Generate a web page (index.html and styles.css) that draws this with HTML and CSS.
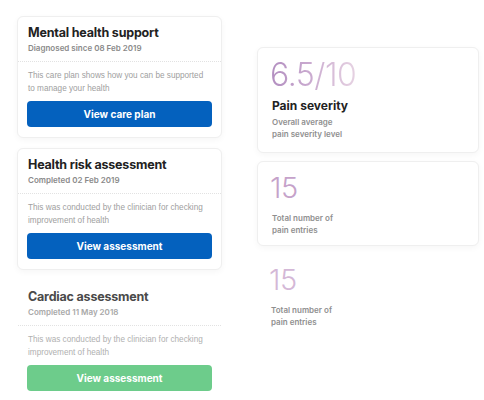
FILE: index.html
```html
<!DOCTYPE html>
<html>
<head>
<meta charset="utf-8">
<link rel="stylesheet" href="styles.css">
</head>
<body>
<div class="board">
  <div class="col col-left">
    <div class="card plan">
      <div class="plan-head">
        <div class="plan-title">Mental health support</div>
        <div class="plan-sub">Diagnosed since 08 Feb 2019</div>
      </div>
      <div class="plan-body">
        <p class="plan-text">This care plan shows how you can be supported<br>to manage your health</p>
        <div class="btn btn-blue">View care plan</div>
      </div>
    </div>
    <div class="card plan">
      <div class="plan-head">
        <div class="plan-title">Health risk assessment</div>
        <div class="plan-sub">Completed 02 Feb 2019</div>
      </div>
      <div class="plan-body">
        <p class="plan-text">This was conducted by the clinician for checking<br>improvement of health</p>
        <div class="btn btn-blue">View assessment</div>
      </div>
    </div>
    <div class="card plan faded">
      <div class="plan-head">
        <div class="plan-title">Cardiac assessment</div>
        <div class="plan-sub">Completed 11 May 2018</div>
      </div>
      <div class="plan-body">
        <p class="plan-text">This was conducted by the clinician for checking<br>improvement of health</p>
        <div class="btn btn-green">View assessment</div>
      </div>
    </div>
  </div>
  <div class="col col-right">
    <div class="card stat stat-a">
      <div class="big grad">6.5/10</div>
      <div class="stat-title">Pain severity</div>
      <div class="stat-sub">Overall average<br>pain severity level</div>
    </div>
    <div class="card stat stat-b">
      <div class="big num">15</div>
      <div class="stat-label">Total number of<br>pain entries</div>
    </div>
    <div class="stat stat-c">
      <div class="big num light">15</div>
      <div class="stat-label">Total number of<br>pain entries</div>
    </div>
  </div>
</div>
</body>
</html>
```

FILE: styles.css
```css
* { box-sizing: border-box; }
html, body { margin: 0; padding: 0; background: #ffffff; }
body { font-family: "Inter", "Liberation Sans", sans-serif; color: #222; }

.board {
  display: flex;
  gap: 35px;
  padding: 16px 0 0 17px;
  width: 484px;
  height: 400px;
  overflow: hidden;
}
.col { display: flex; flex-direction: column; }
.col-left { width: 205px; gap: 10px; }
.col-right { width: 222px; gap: 8px; margin-top: 31px; }

.card {
  background: #fff;
  border: 1px solid #efefef;
  border-radius: 6px;
  box-shadow: 0 2px 6px rgba(0,0,0,0.04);
}

.plan-head {
  padding: 8px 10px 7px;
  border-bottom: 1px dotted #e2e2e2;
}
.plan-title {
  font-size: 12.5px;
  line-height: 16px;
  font-weight: 700;
  letter-spacing: -0.2px;
  color: #222;
}
.plan-sub {
  margin-top: 1px;
  font-size: 8px;
  line-height: 12px;
  font-weight: 600;
  color: #8a8a8a;
}
.plan-body { padding: 7px 9px 10px; }
.plan-text {
  margin: 0 0 6px 1px;
  font-family: "Liberation Sans", sans-serif;
  font-size: 8.2px;
  line-height: 13px;
  color: #a0a0a0;
}
.btn {
  height: 26px;
  border-radius: 4px;
  display: flex;
  align-items: center;
  justify-content: center;
  color: #fff;
  font-size: 10px;
  font-weight: 700;
}
.btn-blue { background: #0461be; }
.btn-green { background: #6dcc8b; }

.faded {
  position: relative;
  border-color: transparent;
  box-shadow: none;
  background: transparent;
}
.faded::before {
  content: "";
  position: absolute;
  left: -1px; right: -1px; top: -1px;
  height: 37px;
  border: 1px solid #eeeeee;
  border-bottom: none;
  border-radius: 6px 6px 0 0;
  box-shadow: 0 -2px 8px rgba(0,0,0,0.05);
  z-index: -1;
}
.faded .plan-title { color: #4a4a4a; }
.faded .plan-sub { color: #a8a8a8; }
.faded .plan-text { color: #b0b0b0; }

.stat { padding: 11px 12px 12px; }
.big {
  font-weight: 300;
  letter-spacing: -0.5px;
}
.grad {
  font-size: 32px;
  line-height: 32px;
  background: linear-gradient(90deg, #b28ec0 0%, #c9a9cf 45%, #e6d2e2 100%);
  -webkit-background-clip: text;
  background-clip: text;
  color: transparent;
  display: inline-block;
  align-self: flex-start;
}
.stat-a { display: flex; flex-direction: column; }
.stat-title {
  margin-top: 7px;
  padding-left: 2px;
  font-size: 12px;
  line-height: 16px;
  font-weight: 700;
  color: #222;
}
.stat-sub, .stat-label {
  margin-top: 2px;
  padding-left: 2px;
  font-size: 8px;
  line-height: 12px;
  font-weight: 600;
  color: #8f8f8f;
}
.num {
  font-size: 29px;
  line-height: 29px;
  color: #c5a2ca;
}
.num.light { color: #d4b8d7; }
.stat-b .stat-label, .stat-c .stat-label { margin-top: 10px; }
.stat-b { padding-bottom: 9px; }
.stat-c { padding-top: 11px; }
```
